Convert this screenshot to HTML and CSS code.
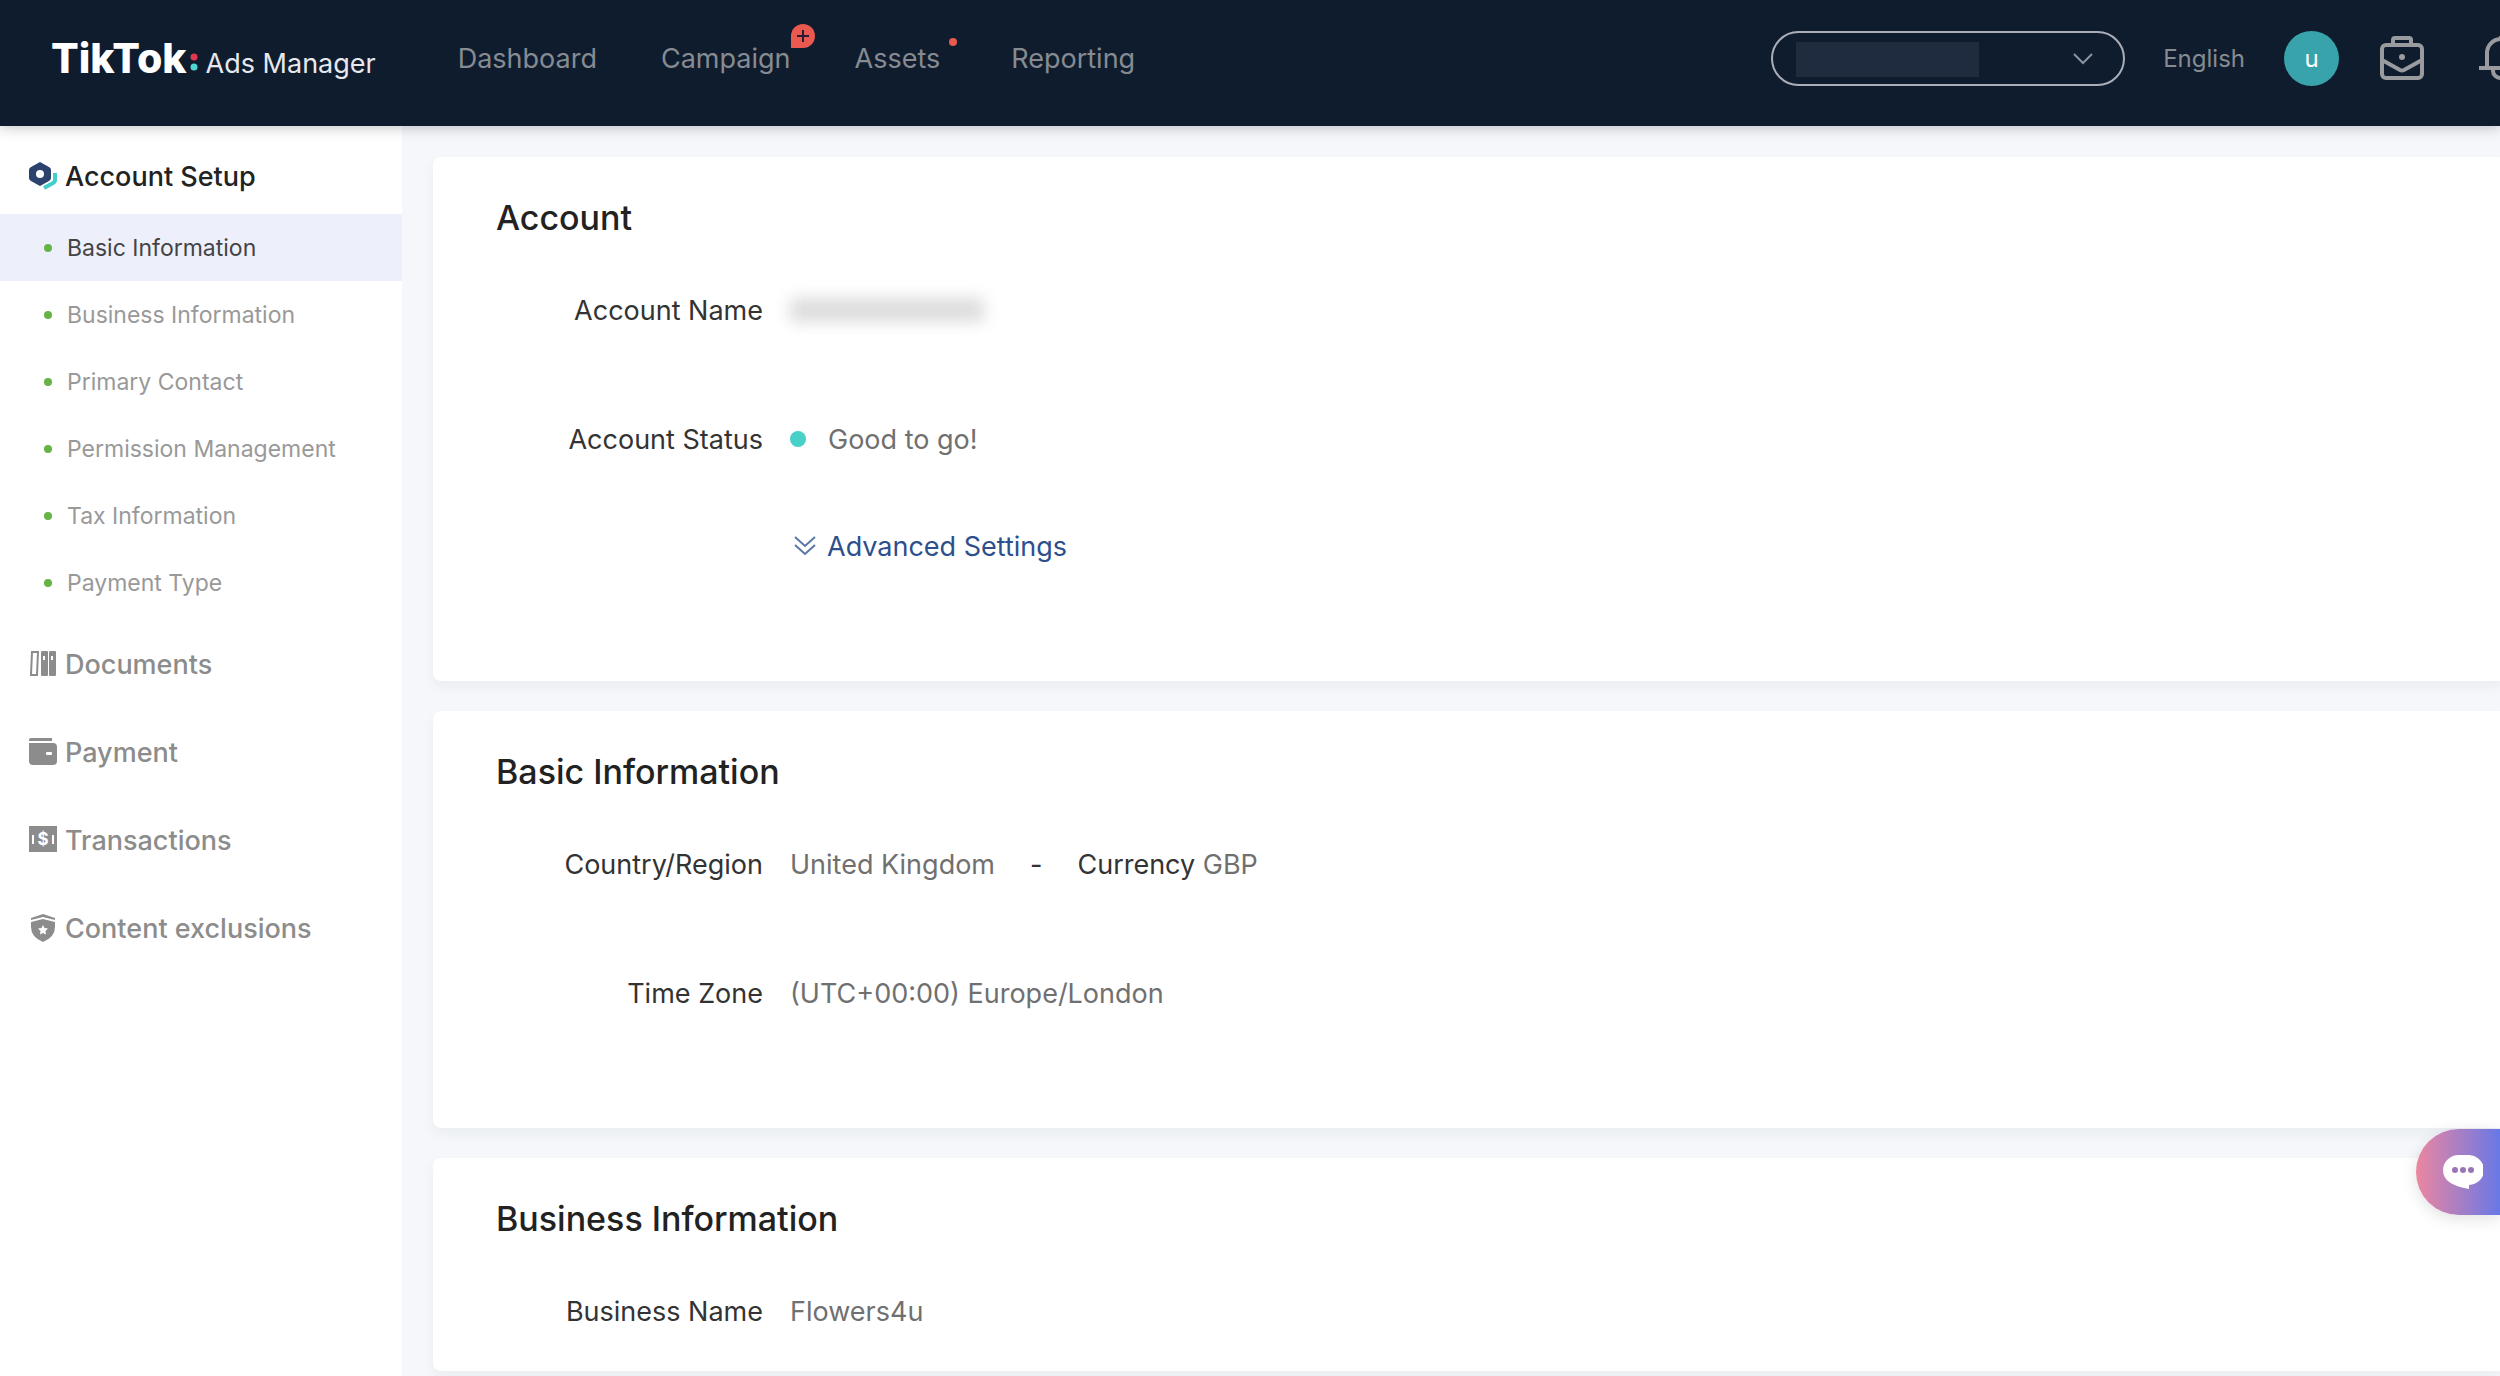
FILE: index.html
```
<!DOCTYPE html>
<html lang="en">
<head>
  <meta charset="UTF-8" />
  <meta name="viewport" content="width=device-width, initial-scale=1.0"/>
  <title>TikTok Ads Manager - Account Setup</title>
  <link rel="stylesheet" href="styles.css">
</head>
<body>
  <header class="topbar">
    <a class="brand" href="#">
      <span class="brand-name">TikTok</span>
      <svg class="brand-dots" viewBox="0 0 8 20" aria-hidden="true">
        <circle cx="4" cy="4" r="3.5" fill="#e0394f"/>
        <circle cx="4" cy="14" r="3.5" fill="#4fd6d3"/>
      </svg>
      <span class="brand-product">Ads Manager</span>
    </a>

    <nav class="main-nav">
      <a href="#">Dashboard</a>
      <a href="#">Campaign
        <svg class="badge-plus" viewBox="0 0 24 24" aria-hidden="true">
          <path d="M0 24V12A12 12 0 1 1 12 24Z" fill="#e9594f"/>
          <path d="M12 6v12M6 12h12" stroke="#2b1a35" stroke-width="2"/>
        </svg>
      </a>
      <a class="with-dot" href="#">Assets<span class="badge-dot"></span></a>
      <a href="#">Reporting</a>
    </nav>

    <div class="tools">
      <div class="account-select">
        <select aria-label="Ad account"><option></option></select>
        <span class="masked"></span>
        <svg class="chevron" viewBox="0 0 20 12" fill="none" aria-hidden="true">
          <path d="M1 1l9 9 9-9" stroke="#8b93a0" stroke-width="2"/>
        </svg>
      </div>
      <button class="language" type="button">English</button>
      <button class="avatar" type="button">u</button>
      <button class="icon-button" type="button" aria-label="Business center">
        <svg viewBox="0 0 44 44" fill="none" stroke="#999b9e" stroke-width="4">
          <path d="M13 8V4q0-2 2-2h14q2 0 2 2v4"/>
          <rect x="2" y="9" width="40" height="33" rx="4"/>
          <path d="M2 24l18 10q2 1 4 0l18-10"/>
          <circle cx="22" cy="21" r="3" fill="#999b9e" stroke="none"/>
        </svg>
      </button>
      <button class="icon-button" type="button" aria-label="Notifications">
        <svg viewBox="0 0 44 44" fill="none" stroke="#999b9e" stroke-width="4">
          <path d="M0 32h44M8 32V17a14 14 0 0 1 28 0v15M22 3V0"/>
          <path d="M14 32v3a8 7 0 0 0 16 0v-3"/>
        </svg>
      </button>
    </div>
  </header>

  <div class="layout">
    <aside class="sidebar">
      <a class="group-head open" href="#">
        <svg viewBox="0 0 28 28" aria-hidden="true">
          <path d="M11 0L20 5q2 1 2 3v8q0 2-2 3l-9 5-9-5q-2-1-2-3V8q0-2 2-3Z" fill="#2b426d"/>
          <circle cx="11" cy="12" r="4" fill="#fff"/>
          <path d="M26 11v7q0 2-2 3l-9 5" fill="none" stroke="#42cfcb" stroke-width="4"/>
        </svg>
        Account Setup
      </a>
      <ul class="sub-menu">
        <li class="active"><a href="#">Basic Information</a></li>
        <li><a href="#">Business Information</a></li>
        <li><a href="#">Primary Contact</a></li>
        <li><a href="#">Permission Management</a></li>
        <li><a href="#">Tax Information</a></li>
        <li><a href="#">Payment Type</a></li>
      </ul>
      <a class="group-head" href="#">
        <svg viewBox="0 0 28 28" aria-hidden="true">
          <path d="M3 2h6l-1 23H2Z" fill="none" stroke="#8c8c8c" stroke-width="2"/>
          <rect x="12" y="1" width="7" height="25" rx="1" fill="#8c8c8c"/>
          <rect x="20" y="1" width="7" height="25" rx="1" fill="#8c8c8c"/>
          <path d="M15 6v4M23 6v4" stroke="#fff" stroke-width="2"/>
        </svg>
        Documents
      </a>
      <a class="group-head" href="#">
        <svg viewBox="0 0 28 28" aria-hidden="true">
          <path d="M2 0h21v3H0V2q0-2 2-2ZM0 5h24q4 0 4 4v14q0 4-4 4H4q-4 0-4-4Z" fill="#8c8c8c"/>
          <rect x="17" y="14" width="6" height="3" rx="1" fill="#fff"/>
        </svg>
        Payment
      </a>
      <a class="group-head" href="#">
        <svg viewBox="0 0 28 28" aria-hidden="true">
          <rect width="28" height="26" fill="#8c8c8c"/>
          <path d="M4 9v9M24 9v9" stroke="#fff" stroke-width="2"/>
          <text class="dollar" x="14" y="19">$</text>
        </svg>
        Transactions
      </a>
      <a class="group-head" href="#">
        <svg viewBox="0 0 28 28" aria-hidden="true">
          <path d="M2 4L14 0l12 4v2L14 3 2 6Z" fill="#8c8c8c"/>
          <path d="M2 8l12-3 12 3v5q0 10-12 15Q2 23 2 13Z" fill="#8c8c8c"/>
          <path d="M14 11l1.500 3 3.500.5-2.500 2.500.5 3.500-3-1.500-3 1.500.5-3.500-2.500-2.500 3.500-.5Z" fill="#fff"/>
        </svg>
        Content exclusions
      </a>
    </aside>

    <main class="content">
      <section class="card">
        <h2>Account</h2>
        <div class="form-row">
          <span class="label">Account Name</span>
          <span class="masked-name"></span>
        </div>
        <div class="form-row">
          <span class="label">Account Status</span>
          <span class="value status">Good to go!</span>
        </div>
        <div class="form-row link-row">
          <span class="label"></span>
          <a class="advanced" href="#">
            <svg viewBox="0 0 22 20" fill="none" stroke="#5b76a6" stroke-width="2" aria-hidden="true">
              <path d="M1 1l10 9 10-9M1 9l10 9 10-9"/>
            </svg>
            Advanced Settings
          </a>
        </div>
      </section>

      <section class="card">
        <h2>Basic Information</h2>
        <div class="form-row">
          <span class="label">Country/Region</span>
          <span class="value">United Kingdom</span>
          <span class="dash">-</span>
          <span class="value"><span class="inline-label">Currency</span> GBP</span>
        </div>
        <div class="form-row">
          <span class="label">Time Zone</span>
          <span class="value">(UTC+00:00) Europe/London</span>
        </div>
      </section>

      <section class="card short">
        <h2>Business Information</h2>
        <div class="form-row">
          <span class="label">Business Name</span>
          <span class="value">Flowers4u</span>
        </div>
      </section>
    </main>
  </div>

  <button class="chat" type="button" aria-label="Open chat">
    <svg viewBox="0 0 40 34" aria-hidden="true">
      <path d="M16 0h8a16 15 0 0 1 2 30v4Q0 30 0 15A16 15 0 0 1 16 0Z" fill="#fff"/>
      <circle cx="12" cy="15" r="3" fill="#9a75b5"/>
      <circle cx="20" cy="15" r="3" fill="#9a75b5"/>
      <circle cx="28" cy="15" r="3" fill="#9a75b5"/>
    </svg>
  </button>
</body>
</html>
```
FILE: styles.css
```
* {
  box-sizing: border-box;
}
body {
  margin: 0;
  min-height: 100vh;
  display: flex;
  flex-direction: column;
  font-family: Inter, "Liberation Sans", sans-serif;
  font-size: 27px;
  color: #333;
  background: #f5f7fa;
  overflow-x: hidden;
}
a {
  color: inherit;
  text-decoration: none;
}
button {
  border: none;
  padding: 0;
  background: none;
  font-family: inherit;
  cursor: pointer;
}

/* top bar */
.topbar {
  display: flex;
  align-items: center;
  height: 126px;
  padding: 0 0 10px 51px;
  background: #0f1c2e;
  box-shadow: 0 2px 12px rgba(30, 30, 50, 0.25);
  position: relative;
  z-index: 2;
}
.brand {
  display: flex;
  align-items: baseline;
  color: #fff;
}
.brand-name {
  font-size: 41px;
  font-weight: 800;
}
.brand-dots {
  width: 8px;
  height: 20px;
  margin: 0 8px 0 3px;
}
.brand-product {
  font-size: 27px;
  color: #e6e8ee;
}
.main-nav {
  display: flex;
  gap: 64px;
  margin-left: 82px;
  color: #868b92;
}
.main-nav a {
  position: relative;
}
.main-nav .with-dot {
  padding-right: 7px;
}
.badge-plus {
  position: absolute;
  left: 100%;
  top: -18px;
  width: 24px;
  height: 24px;
}
.badge-dot {
  position: absolute;
  right: -10px;
  top: -4px;
  width: 8px;
  height: 8px;
  border-radius: 50%;
  background: #e9594f;
}
.tools {
  display: flex;
  align-items: center;
  margin-left: auto;
  margin-right: -23px;
}
.account-select {
  position: relative;
}
.account-select select {
  appearance: none;
  display: block;
  width: 354px;
  height: 55px;
  border: 2px solid #a9aeb8;
  border-radius: 28px;
  background: transparent;
  color: #a9aeb8;
}
.masked {
  position: absolute;
  left: 25px;
  top: 11px;
  width: 183px;
  height: 35px;
  background: #1f2b3f;
  pointer-events: none;
}
.chevron {
  position: absolute;
  right: 32px;
  top: 22px;
  width: 20px;
  height: 12px;
  pointer-events: none;
}
.language {
  margin: 0 39px 0 38px;
  font-size: 24px;
  color: #868b92;
}
.avatar {
  width: 55px;
  height: 55px;
  border-radius: 50%;
  background: #39a3ac;
  color: #fff;
  font-size: 24px;
}
.icon-button {
  width: 44px;
  height: 44px;
  margin-left: 41px;
}
.icon-button + .icon-button {
  margin-left: 55px;
}
.icon-button svg {
  display: block;
}

/* sidebar */
.layout {
  display: flex;
  flex: 1;
}
.sidebar {
  flex: 0 0 402px;
  padding-top: 12px;
  background: #fff;
}
.group-head {
  display: flex;
  align-items: center;
  gap: 8px;
  height: 88px;
  padding-left: 29px;
  font-size: 27px;
  font-weight: 500;
  color: #8c8c8c;
}
.group-head.open {
  height: 76px;
  color: #222;
}
.group-head svg {
  width: 28px;
  height: 28px;
}
.dollar {
  fill: #fff;
  font-size: 17px;
  font-weight: 700;
  text-anchor: middle;
}
.sub-menu {
  list-style: none;
  margin: 0 0 4px;
  padding: 0;
}
.sub-menu a {
  display: flex;
  align-items: center;
  gap: 15px;
  height: 67px;
  padding-left: 44px;
  font-size: 23px;
  color: #999;
}
.sub-menu a::before {
  content: "";
  width: 8px;
  height: 8px;
  border-radius: 50%;
  background: #67b346;
}
.sub-menu .active {
  background: #edf0fb;
}
.sub-menu .active a {
  color: #444;
}

/* content */
.content {
  flex: 1;
  display: flex;
  flex-direction: column;
  gap: 30px;
  padding: 31px 0 4px 31px;
}
.card {
  padding: 39px 63px 105px;
  background: #fff;
  border-radius: 8px 0 0 8px;
  box-shadow: 0 6px 12px rgba(60, 80, 100, 0.06);
}
.card.short {
  padding-bottom: 30px;
}
.card h2 {
  margin: 0 0 40px;
  font-size: 34px;
  line-height: 44px;
  font-weight: 500;
  color: #222;
}
.form-row {
  display: flex;
  align-items: center;
  height: 60px;
}
.form-row + .form-row {
  margin-top: 69px;
}
.form-row + .link-row {
  margin-top: 47px;
}
.label {
  width: 267px;
  margin-right: 27px;
  text-align: right;
}
.value {
  color: #707070;
}
.inline-label {
  color: #333;
}
.dash {
  margin: 0 35px;
}
.status {
  display: flex;
  align-items: center;
  gap: 22px;
}
.status::before {
  content: "";
  width: 16px;
  height: 16px;
  border-radius: 50%;
  background: #47d1c9;
}
.masked-name {
  width: 194px;
  height: 24px;
  background: #dcdcdc;
  filter: blur(8px);
}
.advanced {
  display: flex;
  align-items: center;
  gap: 11px;
  padding-left: 4px;
  color: #2d4f8b;
}
.advanced svg {
  width: 22px;
  height: 20px;
}

/* chat launcher */
.chat {
  position: fixed;
  right: 0;
  bottom: 161px;
  z-index: 3;
  width: 84px;
  height: 86px;
  padding-left: 27px;
  border-radius: 43px 0 0 43px;
  background: linear-gradient(90deg, #ec86a0, #6878e6);
  box-shadow: 0 4px 16px rgba(0, 0, 0, 0.12);
}
.chat svg {
  display: block;
  width: 40px;
  height: 34px;
}
```
